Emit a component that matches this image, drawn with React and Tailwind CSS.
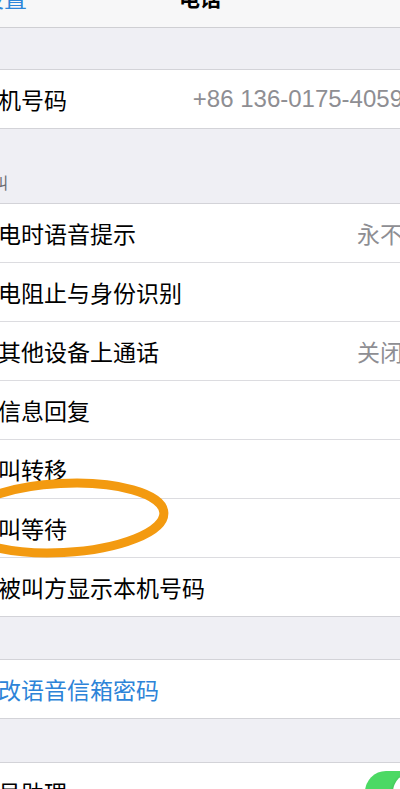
import React from 'react';

const cjk = { fontFamily: '"Noto Sans CJK SC", "Noto Sans", sans-serif' };
const latin = { fontFamily: '"Liberation Sans", Arial, sans-serif' };

function Chevron() {
  return (
    <svg width="13" height="22" viewBox="0 0 13 22" className="shrink-0">
      <path d="M2 2l9 9-9 9" fill="none" stroke="#c7c7cc" strokeWidth="2.5" strokeLinecap="round" strokeLinejoin="round" />
    </svg>
  );
}

function Row({ label, value, valueLatin, blue, toggle, first }) {
  return (
    <div className={`flex items-center bg-white ${first ? 'h-[58px]' : 'h-[59px] border-t border-[#dcdce0]'}`}>
      <span
        className={`-ml-[25px] text-[23px] leading-none whitespace-nowrap ${blue ? 'text-[#2d84d8]' : 'text-black'}`}
        style={cjk}
      >
        {label}
      </span>
      {value && (
        <div className="ml-auto -mr-[28px] flex items-center gap-[12px] shrink-0">
          <span
            className={`${valueLatin ? 'text-[24px]' : 'text-[23px]'} leading-none text-[#8e8e93] whitespace-nowrap`}
            style={valueLatin ? latin : cjk}
          >
            {value}
          </span>
          <Chevron />
        </div>
      )}
      {toggle && (
        <div className="ml-auto -mr-[33px] shrink-0 w-[68px] h-[42px] rounded-full bg-[#4cd964] flex items-center justify-end pr-[2px]">
          <div className="w-[38px] h-[38px] rounded-full bg-white shadow-[0_2px_4px_rgba(0,0,0,0.25)]" />
        </div>
      )}
    </div>
  );
}

function Group({ children }) {
  return <div className="border-y border-[#d3d3d8] bg-white">{children}</div>;
}

export default function App() {
  return (
    <div className="relative w-[400px] h-[789px] overflow-hidden bg-[#efeff4]">
      {/* nav bar, mostly scrolled off the top */}
      <div className="-mt-[32px] h-[60px] bg-[#f7f7f8] border-b border-[#cfcfd3] relative flex items-center">
        <span className="-ml-[19px] text-[23px] leading-none text-[#2d86d9]" style={cjk}>设置</span>
        <span className="absolute left-0 right-0 text-center text-[21px] leading-none font-semibold text-black" style={cjk}>
          电话
        </span>
      </div>

      <div className="h-[41px]" />
      <Group>
        <Row first label="本机号码" value="+86 136-0175-4059" valueLatin />
      </Group>

      <div className="h-[74px] flex items-end pb-[13px]">
        <span className="-ml-[24px] text-[16px] leading-none text-[#6d6d72]" style={cjk}>呼叫</span>
      </div>
      <Group>
        <Row first label="来电时语音提示" value="永不" />
        <Row label="来电阻止与身份识别" />
        <Row label="在其他设备上通话" value="关闭" />
        <Row label="用信息回复" />
        <Row label="呼叫转移" />
        <Row label="呼叫等待" />
        <Row label="向被叫方显示本机号码" />
      </Group>

      <div className="h-[42px]" />
      <Group>
        <Row first label="更改语音信箱密码" blue />
      </Group>

      <div className="h-[43px]" />
      <Group>
        <Row first label="拨号助理" toggle />
      </Group>

      {/* orange hand-drawn circle around 呼叫等待 */}
      <svg className="absolute left-0 top-0 pointer-events-none" width="400" height="789">
        <ellipse
          cx="62"
          cy="518"
          rx="102"
          ry="34.5"
          transform="rotate(-3 62 518)"
          fill="none"
          stroke="#f39a10"
          strokeWidth="9"
        />
      </svg>
    </div>
  );
}
